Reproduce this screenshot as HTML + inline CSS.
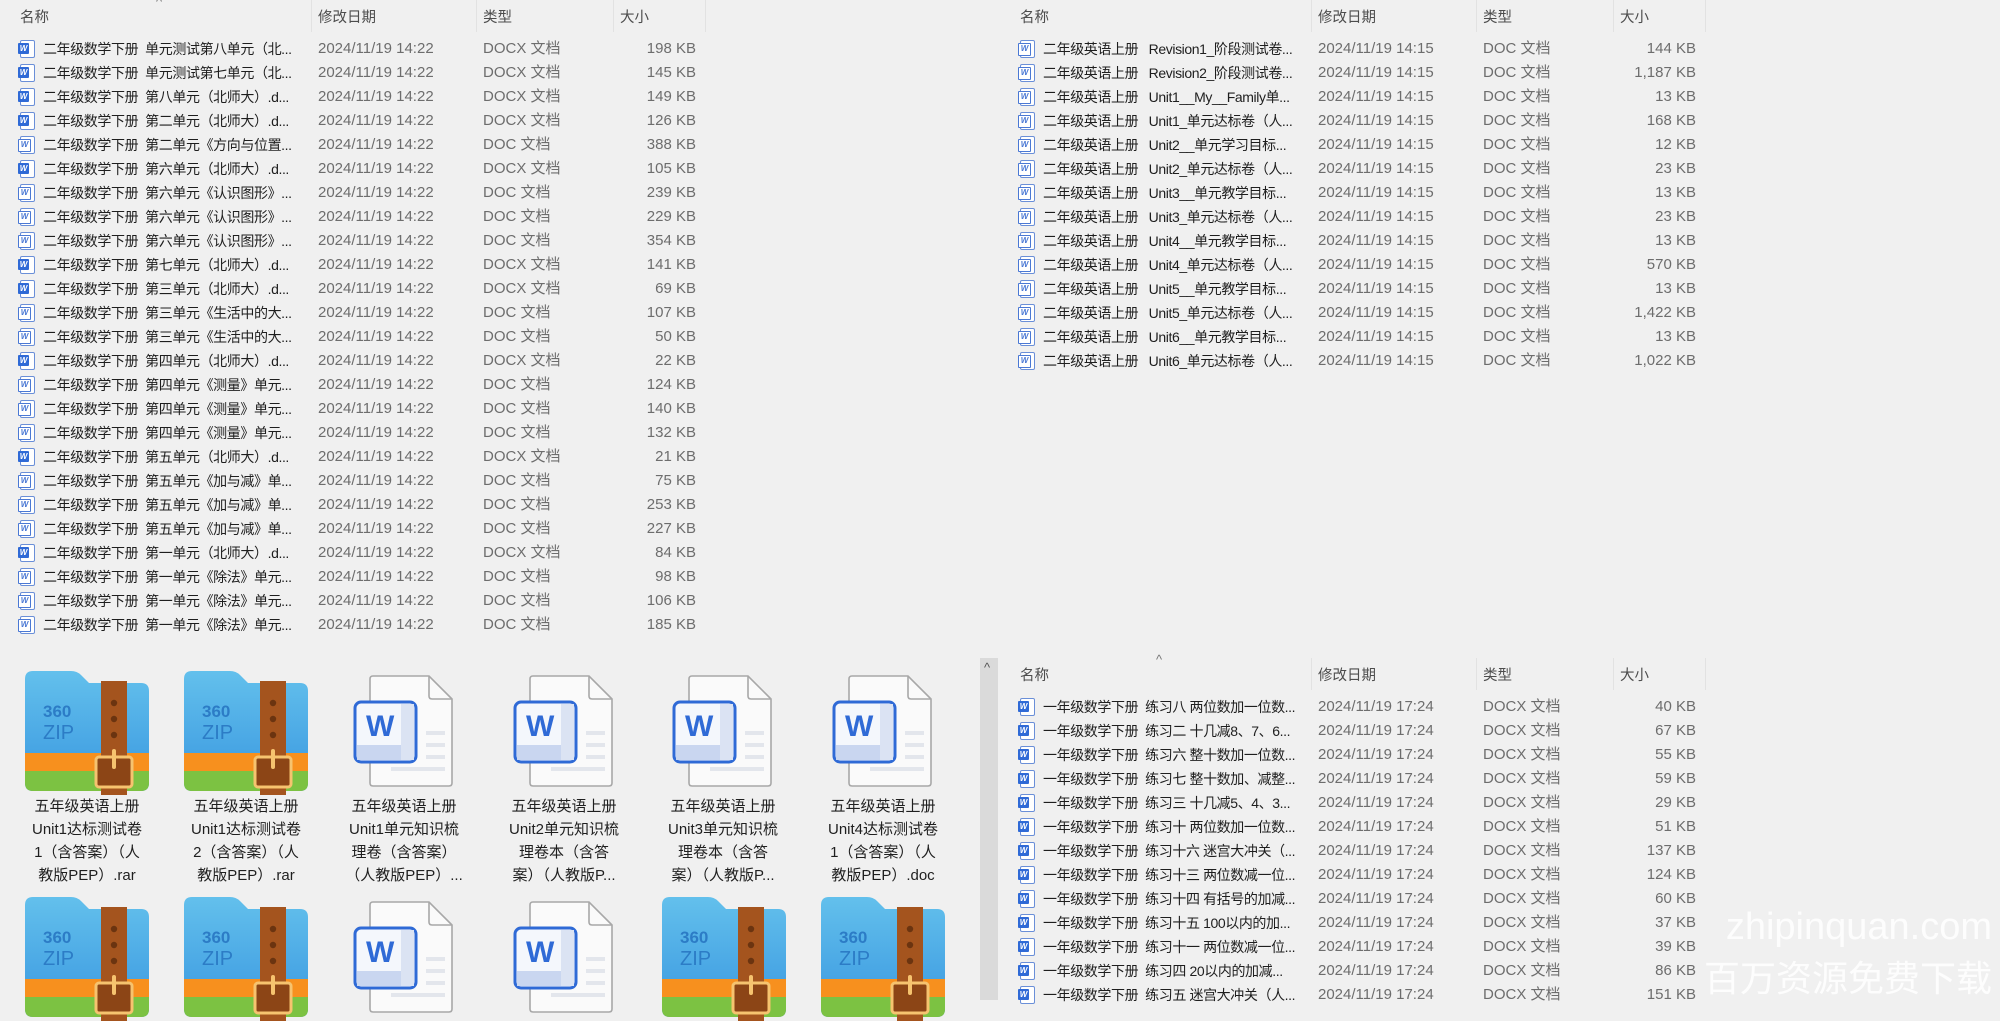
<!DOCTYPE html>
<html style="background:#f0f0f0"><head><meta charset="utf-8">
<style>
*{margin:0;padding:0;box-sizing:border-box}
body{width:2000px;height:1000px;overflow:hidden;background:#f0f0f0;font-family:"Liberation Sans","Noto Sans CJK SC",sans-serif;font-size:15px;position:relative}
.L{position:absolute;left:0;width:720px}
.h{position:absolute;height:34px;width:100%;color:#4d4d4d;font-size:14.5px}
.h span{position:absolute;top:6px}
.h i{position:absolute;top:0;width:1px;height:32px;background:#e2e2e2}
.h b{position:absolute;top:-6px;left:156px;font-weight:normal;color:#777;font-size:13px}
.r{position:absolute;height:24px;width:100%;line-height:24px;white-space:nowrap}
.r .n{position:absolute;left:43px;color:#1e1e1e;font-size:14px;letter-spacing:-0.4px;width:262px;overflow:hidden}
.r .d{position:absolute;left:318px;color:#6d6d6d}
.r .t{position:absolute;left:483px;color:#6d6d6d}
.r .s{position:absolute;right:24px;color:#6d6d6d}
.ic{position:absolute;left:20px;top:3px;width:15px;height:18px;border:1.5px solid #6a8fd8;border-radius:2px;background:#fff}
.ic:before{content:"W";position:absolute;left:-3px;top:2px;width:11px;height:11px;font-size:8px;line-height:11px;text-align:center;font-weight:bold;color:#fff;background:#2f6ad6;border-radius:1px}
.o:before{background:#fff;color:#4a78d4;border:1px solid #4a78d4;line-height:9px}
.g{position:absolute;width:150px;text-align:center;color:#1f1f1f;font-size:15px;line-height:23px}
.z,.w{position:absolute}
.sb{position:absolute;left:980px;top:658px;width:18px;height:342px;background:#dadada}
.sb:before{content:"^";position:absolute;left:4px;top:2px;font-size:13px;color:#555}
.wm{position:absolute;right:8px;color:rgba(255,255,255,.85);text-align:right;font-family:"Liberation Sans","Noto Sans CJK SC",sans-serif}
</style></head><body>
<svg width="0" height="0" style="position:absolute">
<defs>
<linearGradient id="bl" x1="0" y1="0" x2="0" y2="1"><stop offset="0" stop-color="#63c0ec"/><stop offset="1" stop-color="#3997e0"/></linearGradient>
<symbol id="zip" viewBox="0 0 128 128">
<path d="M10 4h38q6 0 10 4l8 8h52q8 0 8 8v92q0 8-8 8H10q-8 0-8-8V12q0-8 8-8z" fill="url(#bl)"/>
<rect x="2" y="86" width="124" height="18" fill="#f7901e"/>
<path d="M2 104h124v12q0 8-8 8H10q-8 0-8-8z" fill="#7cc242"/>
<rect x="78" y="14" width="26" height="114" fill="#a4541e"/>
<circle cx="91" cy="36" r="3.2" fill="#6b3410"/><circle cx="91" cy="52" r="3.2" fill="#6b3410"/><circle cx="91" cy="68" r="3.2" fill="#6b3410"/>
<rect x="73" y="90" width="36" height="30" rx="3" fill="#8c4516" stroke="#f6c36f" stroke-width="3"/>
<rect x="89" y="82" width="4" height="20" rx="2" fill="#f6c36f"/>
<text x="20" y="50" font-family="Liberation Sans" font-size="17" fill="#2c7cc6" font-weight="bold">360</text>
<text x="20" y="72" font-family="Liberation Sans" font-size="20" fill="#2c7cc6">ZIP</text>
</symbol>
<symbol id="wd" viewBox="0 0 100 112">
<path d="M20 1h56l23 23v84q0 3-3 3H20q-3 0-3-3V4q0-3 3-3z" fill="#fafafa" stroke="#a8a8a8" stroke-width="1.6"/>
<path d="M76 1v20q0 3 3 3h20" fill="none" stroke="#a8a8a8" stroke-width="1.6"/>
<rect x="73" y="56" width="19" height="4" fill="#e3e6ec"/><rect x="73" y="68" width="19" height="4" fill="#e3e6ec"/><rect x="73" y="80" width="19" height="4" fill="#e3e6ec"/><rect x="38" y="92" width="54" height="4" fill="#e3e6ec"/>
<rect x="2" y="27" width="61" height="60" rx="6" fill="#f4f7fc" stroke="#2f6ad6" stroke-width="3"/>
<rect x="4" y="70" width="57" height="15" fill="#c9d6f0"/><rect x="48" y="29" width="13" height="56" fill="#dbe3f3"/>
<text x="13" y="61" font-family="Liberation Sans" font-size="30" font-weight="bold" fill="#2f6ad6">W</text>
</symbol>
</defs></svg>

<div class="L" style="top:0">
<div class="h"><b>^</b><span style="left:20px">名称</span><i style="left:311px"></i><span style="left:318px">修改日期</span><i style="left:476px"></i><span style="left:483px">类型</span><i style="left:613px"></i><span style="left:620px">大小</span><i style="left:705px"></i></div>
<div class="r" style="top:37px"><i class="ic"></i><span class="n">二年级数学下册&nbsp; 单元测试第八单元（北...</span><span class="d">2024/11/19 14:22</span><span class="t">DOCX 文档</span><span class="s">198 KB</span></div>
<div class="r" style="top:61px"><i class="ic"></i><span class="n">二年级数学下册&nbsp; 单元测试第七单元（北...</span><span class="d">2024/11/19 14:22</span><span class="t">DOCX 文档</span><span class="s">145 KB</span></div>
<div class="r" style="top:85px"><i class="ic"></i><span class="n">二年级数学下册&nbsp; 第八单元（北师大）.d...</span><span class="d">2024/11/19 14:22</span><span class="t">DOCX 文档</span><span class="s">149 KB</span></div>
<div class="r" style="top:109px"><i class="ic"></i><span class="n">二年级数学下册&nbsp; 第二单元（北师大）.d...</span><span class="d">2024/11/19 14:22</span><span class="t">DOCX 文档</span><span class="s">126 KB</span></div>
<div class="r" style="top:133px"><i class="ic o"></i><span class="n">二年级数学下册&nbsp; 第二单元《方向与位置...</span><span class="d">2024/11/19 14:22</span><span class="t">DOC 文档</span><span class="s">388 KB</span></div>
<div class="r" style="top:157px"><i class="ic"></i><span class="n">二年级数学下册&nbsp; 第六单元（北师大）.d...</span><span class="d">2024/11/19 14:22</span><span class="t">DOCX 文档</span><span class="s">105 KB</span></div>
<div class="r" style="top:181px"><i class="ic o"></i><span class="n">二年级数学下册&nbsp; 第六单元《认识图形》...</span><span class="d">2024/11/19 14:22</span><span class="t">DOC 文档</span><span class="s">239 KB</span></div>
<div class="r" style="top:205px"><i class="ic o"></i><span class="n">二年级数学下册&nbsp; 第六单元《认识图形》...</span><span class="d">2024/11/19 14:22</span><span class="t">DOC 文档</span><span class="s">229 KB</span></div>
<div class="r" style="top:229px"><i class="ic o"></i><span class="n">二年级数学下册&nbsp; 第六单元《认识图形》...</span><span class="d">2024/11/19 14:22</span><span class="t">DOC 文档</span><span class="s">354 KB</span></div>
<div class="r" style="top:253px"><i class="ic"></i><span class="n">二年级数学下册&nbsp; 第七单元（北师大）.d...</span><span class="d">2024/11/19 14:22</span><span class="t">DOCX 文档</span><span class="s">141 KB</span></div>
<div class="r" style="top:277px"><i class="ic"></i><span class="n">二年级数学下册&nbsp; 第三单元（北师大）.d...</span><span class="d">2024/11/19 14:22</span><span class="t">DOCX 文档</span><span class="s">69 KB</span></div>
<div class="r" style="top:301px"><i class="ic o"></i><span class="n">二年级数学下册&nbsp; 第三单元《生活中的大...</span><span class="d">2024/11/19 14:22</span><span class="t">DOC 文档</span><span class="s">107 KB</span></div>
<div class="r" style="top:325px"><i class="ic o"></i><span class="n">二年级数学下册&nbsp; 第三单元《生活中的大...</span><span class="d">2024/11/19 14:22</span><span class="t">DOC 文档</span><span class="s">50 KB</span></div>
<div class="r" style="top:349px"><i class="ic"></i><span class="n">二年级数学下册&nbsp; 第四单元（北师大）.d...</span><span class="d">2024/11/19 14:22</span><span class="t">DOCX 文档</span><span class="s">22 KB</span></div>
<div class="r" style="top:373px"><i class="ic o"></i><span class="n">二年级数学下册&nbsp; 第四单元《测量》单元...</span><span class="d">2024/11/19 14:22</span><span class="t">DOC 文档</span><span class="s">124 KB</span></div>
<div class="r" style="top:397px"><i class="ic o"></i><span class="n">二年级数学下册&nbsp; 第四单元《测量》单元...</span><span class="d">2024/11/19 14:22</span><span class="t">DOC 文档</span><span class="s">140 KB</span></div>
<div class="r" style="top:421px"><i class="ic o"></i><span class="n">二年级数学下册&nbsp; 第四单元《测量》单元...</span><span class="d">2024/11/19 14:22</span><span class="t">DOC 文档</span><span class="s">132 KB</span></div>
<div class="r" style="top:445px"><i class="ic"></i><span class="n">二年级数学下册&nbsp; 第五单元（北师大）.d...</span><span class="d">2024/11/19 14:22</span><span class="t">DOCX 文档</span><span class="s">21 KB</span></div>
<div class="r" style="top:469px"><i class="ic o"></i><span class="n">二年级数学下册&nbsp; 第五单元《加与减》单...</span><span class="d">2024/11/19 14:22</span><span class="t">DOC 文档</span><span class="s">75 KB</span></div>
<div class="r" style="top:493px"><i class="ic o"></i><span class="n">二年级数学下册&nbsp; 第五单元《加与减》单...</span><span class="d">2024/11/19 14:22</span><span class="t">DOC 文档</span><span class="s">253 KB</span></div>
<div class="r" style="top:517px"><i class="ic o"></i><span class="n">二年级数学下册&nbsp; 第五单元《加与减》单...</span><span class="d">2024/11/19 14:22</span><span class="t">DOC 文档</span><span class="s">227 KB</span></div>
<div class="r" style="top:541px"><i class="ic"></i><span class="n">二年级数学下册&nbsp; 第一单元（北师大）.d...</span><span class="d">2024/11/19 14:22</span><span class="t">DOCX 文档</span><span class="s">84 KB</span></div>
<div class="r" style="top:565px"><i class="ic o"></i><span class="n">二年级数学下册&nbsp; 第一单元《除法》单元...</span><span class="d">2024/11/19 14:22</span><span class="t">DOC 文档</span><span class="s">98 KB</span></div>
<div class="r" style="top:589px"><i class="ic o"></i><span class="n">二年级数学下册&nbsp; 第一单元《除法》单元...</span><span class="d">2024/11/19 14:22</span><span class="t">DOC 文档</span><span class="s">106 KB</span></div>
<div class="r" style="top:613px"><i class="ic o"></i><span class="n">二年级数学下册&nbsp; 第一单元《除法》单元...</span><span class="d">2024/11/19 14:22</span><span class="t">DOC 文档</span><span class="s">185 KB</span></div>
</div>

<div class="L" style="top:0;left:1000px">
<div class="h"><span style="left:20px">名称</span><i style="left:311px"></i><span style="left:318px">修改日期</span><i style="left:476px"></i><span style="left:483px">类型</span><i style="left:613px"></i><span style="left:620px">大小</span><i style="left:705px"></i></div>
<div class="r" style="top:37px"><i class="ic o"></i><span class="n">二年级英语上册&nbsp;&nbsp; Revision1_阶段测试卷...</span><span class="d">2024/11/19 14:15</span><span class="t">DOC 文档</span><span class="s">144 KB</span></div>
<div class="r" style="top:61px"><i class="ic o"></i><span class="n">二年级英语上册&nbsp;&nbsp; Revision2_阶段测试卷...</span><span class="d">2024/11/19 14:15</span><span class="t">DOC 文档</span><span class="s">1,187 KB</span></div>
<div class="r" style="top:85px"><i class="ic o"></i><span class="n">二年级英语上册&nbsp;&nbsp; Unit1__My__Family单...</span><span class="d">2024/11/19 14:15</span><span class="t">DOC 文档</span><span class="s">13 KB</span></div>
<div class="r" style="top:109px"><i class="ic o"></i><span class="n">二年级英语上册&nbsp;&nbsp; Unit1_单元达标卷（人...</span><span class="d">2024/11/19 14:15</span><span class="t">DOC 文档</span><span class="s">168 KB</span></div>
<div class="r" style="top:133px"><i class="ic o"></i><span class="n">二年级英语上册&nbsp;&nbsp; Unit2__单元学习目标...</span><span class="d">2024/11/19 14:15</span><span class="t">DOC 文档</span><span class="s">12 KB</span></div>
<div class="r" style="top:157px"><i class="ic o"></i><span class="n">二年级英语上册&nbsp;&nbsp; Unit2_单元达标卷（人...</span><span class="d">2024/11/19 14:15</span><span class="t">DOC 文档</span><span class="s">23 KB</span></div>
<div class="r" style="top:181px"><i class="ic o"></i><span class="n">二年级英语上册&nbsp;&nbsp; Unit3__单元教学目标...</span><span class="d">2024/11/19 14:15</span><span class="t">DOC 文档</span><span class="s">13 KB</span></div>
<div class="r" style="top:205px"><i class="ic o"></i><span class="n">二年级英语上册&nbsp;&nbsp; Unit3_单元达标卷（人...</span><span class="d">2024/11/19 14:15</span><span class="t">DOC 文档</span><span class="s">23 KB</span></div>
<div class="r" style="top:229px"><i class="ic o"></i><span class="n">二年级英语上册&nbsp;&nbsp; Unit4__单元教学目标...</span><span class="d">2024/11/19 14:15</span><span class="t">DOC 文档</span><span class="s">13 KB</span></div>
<div class="r" style="top:253px"><i class="ic o"></i><span class="n">二年级英语上册&nbsp;&nbsp; Unit4_单元达标卷（人...</span><span class="d">2024/11/19 14:15</span><span class="t">DOC 文档</span><span class="s">570 KB</span></div>
<div class="r" style="top:277px"><i class="ic o"></i><span class="n">二年级英语上册&nbsp;&nbsp; Unit5__单元教学目标...</span><span class="d">2024/11/19 14:15</span><span class="t">DOC 文档</span><span class="s">13 KB</span></div>
<div class="r" style="top:301px"><i class="ic o"></i><span class="n">二年级英语上册&nbsp;&nbsp; Unit5_单元达标卷（人...</span><span class="d">2024/11/19 14:15</span><span class="t">DOC 文档</span><span class="s">1,422 KB</span></div>
<div class="r" style="top:325px"><i class="ic o"></i><span class="n">二年级英语上册&nbsp;&nbsp; Unit6__单元教学目标...</span><span class="d">2024/11/19 14:15</span><span class="t">DOC 文档</span><span class="s">13 KB</span></div>
<div class="r" style="top:349px"><i class="ic o"></i><span class="n">二年级英语上册&nbsp;&nbsp; Unit6_单元达标卷（人...</span><span class="d">2024/11/19 14:15</span><span class="t">DOC 文档</span><span class="s">1,022 KB</span></div>
</div>

<div class="sb"></div>
<div class="L" style="top:658px;left:1000px">
<div class="h"><b>^</b><span style="left:20px">名称</span><i style="left:311px"></i><span style="left:318px">修改日期</span><i style="left:476px"></i><span style="left:483px">类型</span><i style="left:613px"></i><span style="left:620px">大小</span><i style="left:705px"></i></div>
<div class="r" style="top:37px"><i class="ic"></i><span class="n">一年级数学下册&nbsp; 练习八 两位数加一位数...</span><span class="d">2024/11/19 17:24</span><span class="t">DOCX 文档</span><span class="s">40 KB</span></div>
<div class="r" style="top:61px"><i class="ic"></i><span class="n">一年级数学下册&nbsp; 练习二 十几减8、7、6...</span><span class="d">2024/11/19 17:24</span><span class="t">DOCX 文档</span><span class="s">67 KB</span></div>
<div class="r" style="top:85px"><i class="ic"></i><span class="n">一年级数学下册&nbsp; 练习六 整十数加一位数...</span><span class="d">2024/11/19 17:24</span><span class="t">DOCX 文档</span><span class="s">55 KB</span></div>
<div class="r" style="top:109px"><i class="ic"></i><span class="n">一年级数学下册&nbsp; 练习七 整十数加、减整...</span><span class="d">2024/11/19 17:24</span><span class="t">DOCX 文档</span><span class="s">59 KB</span></div>
<div class="r" style="top:133px"><i class="ic"></i><span class="n">一年级数学下册&nbsp; 练习三 十几减5、4、3...</span><span class="d">2024/11/19 17:24</span><span class="t">DOCX 文档</span><span class="s">29 KB</span></div>
<div class="r" style="top:157px"><i class="ic"></i><span class="n">一年级数学下册&nbsp; 练习十 两位数加一位数...</span><span class="d">2024/11/19 17:24</span><span class="t">DOCX 文档</span><span class="s">51 KB</span></div>
<div class="r" style="top:181px"><i class="ic"></i><span class="n">一年级数学下册&nbsp; 练习十六 迷宫大冲关（...</span><span class="d">2024/11/19 17:24</span><span class="t">DOCX 文档</span><span class="s">137 KB</span></div>
<div class="r" style="top:205px"><i class="ic"></i><span class="n">一年级数学下册&nbsp; 练习十三 两位数减一位...</span><span class="d">2024/11/19 17:24</span><span class="t">DOCX 文档</span><span class="s">124 KB</span></div>
<div class="r" style="top:229px"><i class="ic"></i><span class="n">一年级数学下册&nbsp; 练习十四 有括号的加减...</span><span class="d">2024/11/19 17:24</span><span class="t">DOCX 文档</span><span class="s">60 KB</span></div>
<div class="r" style="top:253px"><i class="ic"></i><span class="n">一年级数学下册&nbsp; 练习十五 100以内的加...</span><span class="d">2024/11/19 17:24</span><span class="t">DOCX 文档</span><span class="s">37 KB</span></div>
<div class="r" style="top:277px"><i class="ic"></i><span class="n">一年级数学下册&nbsp; 练习十一 两位数减一位...</span><span class="d">2024/11/19 17:24</span><span class="t">DOCX 文档</span><span class="s">39 KB</span></div>
<div class="r" style="top:301px"><i class="ic"></i><span class="n">一年级数学下册&nbsp; 练习四 20以内的加减...</span><span class="d">2024/11/19 17:24</span><span class="t">DOCX 文档</span><span class="s">86 KB</span></div>
<div class="r" style="top:325px"><i class="ic"></i><span class="n">一年级数学下册&nbsp; 练习五 迷宫大冲关（人...</span><span class="d">2024/11/19 17:24</span><span class="t">DOCX 文档</span><span class="s">151 KB</span></div>
</div>

<svg class="z" style="left:23px;top:667px" width="128" height="128"><use href="#zip"/></svg>
<svg class="z" style="left:182px;top:667px" width="128" height="128"><use href="#zip"/></svg>
<svg class="w" style="left:353px;top:675px" width="100" height="112"><use href="#wd"/></svg>
<svg class="w" style="left:513px;top:675px" width="100" height="112"><use href="#wd"/></svg>
<svg class="w" style="left:672px;top:675px" width="100" height="112"><use href="#wd"/></svg>
<svg class="w" style="left:832px;top:675px" width="100" height="112"><use href="#wd"/></svg>

<div class="g" style="left:12px;top:795px">五年级英语上册<br>Unit1达标测试卷<br>1（含答案）（人<br>教版PEP）.rar</div>
<div class="g" style="left:171px;top:795px">五年级英语上册<br>Unit1达标测试卷<br>2（含答案）（人<br>教版PEP）.rar</div>
<div class="g" style="left:329px;top:795px">五年级英语上册<br>Unit1单元知识梳<br>理卷（含答案）<br>（人教版PEP）...</div>
<div class="g" style="left:489px;top:795px">五年级英语上册<br>Unit2单元知识梳<br>理卷本（含答<br>案）（人教版P...</div>
<div class="g" style="left:648px;top:795px">五年级英语上册<br>Unit3单元知识梳<br>理卷本（含答<br>案）（人教版P...</div>
<div class="g" style="left:808px;top:795px">五年级英语上册<br>Unit4达标测试卷<br>1（含答案）（人<br>教版PEP）.doc</div>

<svg class="z" style="left:23px;top:893px" width="128" height="128"><use href="#zip"/></svg>
<svg class="z" style="left:182px;top:893px" width="128" height="128"><use href="#zip"/></svg>
<svg class="w" style="left:353px;top:901px" width="100" height="112"><use href="#wd"/></svg>
<svg class="w" style="left:513px;top:901px" width="100" height="112"><use href="#wd"/></svg>
<svg class="z" style="left:660px;top:893px" width="128" height="128"><use href="#zip"/></svg>
<svg class="z" style="left:819px;top:893px" width="128" height="128"><use href="#zip"/></svg>

<div class="wm" style="top:906px;font-size:38px">zhipinquan.com</div>
<div class="wm" style="top:950px;font-size:36px">百万资源免费下载</div>
</body></html>
